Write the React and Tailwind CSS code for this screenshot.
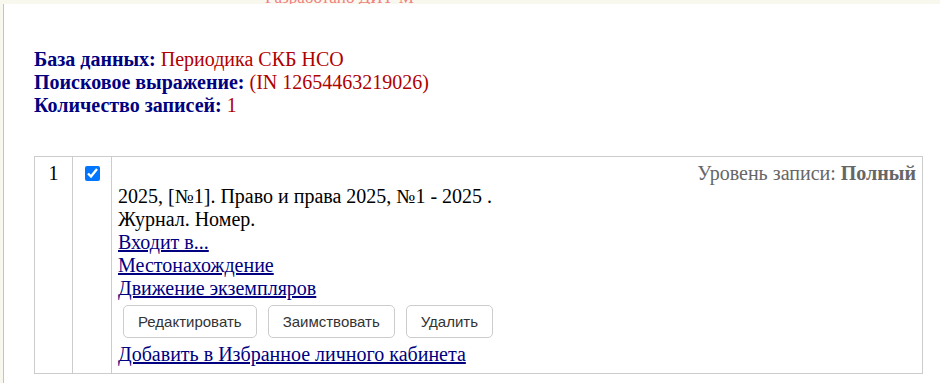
export default function App() {
  const serif = { fontFamily: '"Liberation Serif", "Times New Roman", serif' };
  const btn = "h-[33px] px-[14px] rounded-[5px] border border-[#cccccc] bg-white text-[15px] text-[#333333]";
  return (
    <div className="w-[940px] h-[383px] overflow-hidden bg-white" style={serif}>
      <div className="h-[4px] bg-[#f9f8ef] overflow-hidden relative">
        <div className="absolute left-[265px] top-[-12px] text-[17px] leading-[20px] text-[#f08080] whitespace-nowrap">
          Разработано ДИТ-М
        </div>
      </div>
      <div className="flex h-[379px]">
        <div className="w-[3px] bg-[#f9f8ef]"></div>
        <div className="w-[1px] bg-[#c4c4c4]"></div>
        <div className="flex-1 pl-[30px] pt-[44px] text-[20px]">
          <div className="leading-[23px]">
            <div>
              <b className="text-[#000080]">База данных:</b>{" "}
              <span className="text-[#b00000]">Периодика СКБ НСО</span>
            </div>
            <div>
              <b className="text-[#000080]">Поисковое выражение:</b>{" "}
              <span className="text-[#b00000]">(IN 12654463219026)</span>
            </div>
            <div>
              <b className="text-[#000080]">Количество записей:</b>{" "}
              <span className="text-[#b00000]">1</span>
            </div>
          </div>
          <table className="mt-[39px] w-[889px] border-collapse border border-[#cccccc] leading-[23px]">
            <tbody>
              <tr>
                <td className="w-[38px] border border-[#cccccc] align-top text-center pt-[5px]">1</td>
                <td className="w-[39px] border border-[#cccccc] align-top text-center pt-[5px]">
                  <input type="checkbox" defaultChecked className="w-[15px] h-[15px] mt-[4px]" />
                </td>
                <td className="border border-[#cccccc] align-top px-[6px] pt-[5px] pb-[7px]">
                  <div className="text-right text-[#666666]">
                    Уровень записи: <b>Полный</b>
                  </div>
                  <div className="text-black">2025, [№1]. Право и права 2025, №1 - 2025 .</div>
                  <div className="text-black">Журнал. Номер.</div>
                  <div><a href="#" className="text-[#000080] underline">Входит в...</a></div>
                  <div><a href="#" className="text-[#000080] underline">Местонахождение</a></div>
                  <div><a href="#" className="text-[#000080] underline">Движение экземпляров</a></div>
                  <div className="flex gap-[11px] ml-[5px] mt-[5px] mb-[5px]" style={{ fontFamily: '"Liberation Sans", Arial, sans-serif' }}>
                    <button className={btn}>Редактировать</button>
                    <button className={btn}>Заимствовать</button>
                    <button className={btn}>Удалить</button>
                  </div>
                  <div><a href="#" className="text-[#000080] underline">Добавить в Избранное личного кабинета</a></div>
                </td>
              </tr>
            </tbody>
          </table>
        </div>
      </div>
    </div>
  );
}
